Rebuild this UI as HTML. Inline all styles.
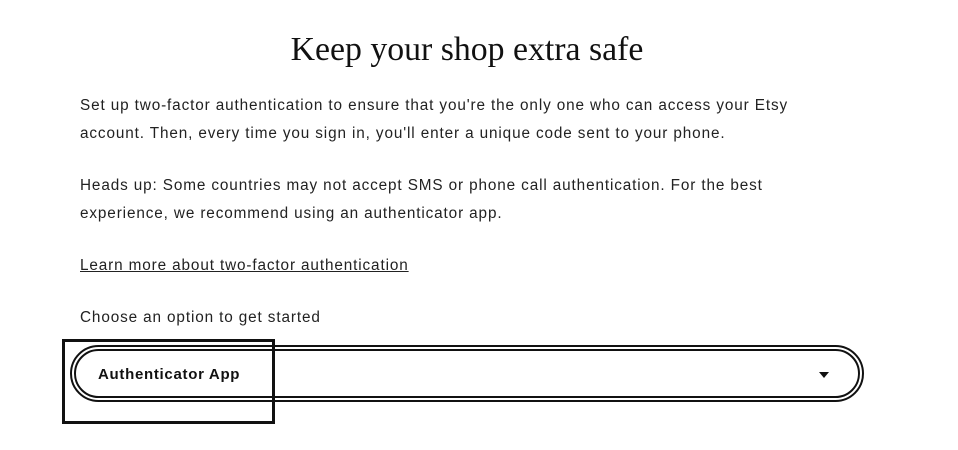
<!DOCTYPE html>
<html><head><style>
body{margin:0;width:958px;height:450px;background:#fff;font-family:"Liberation Sans",sans-serif;color:#222;position:relative;overflow:hidden}
h1{position:absolute;top:31px;left:0;width:934px;text-align:center;margin:0;font-family:"Liberation Serif",serif;font-weight:normal;font-size:33.8px;color:#111}
p{position:absolute;left:80px;margin:0;font-size:15.3px;line-height:28px;width:860px;white-space:nowrap;letter-spacing:0.88px}
a{color:#222;text-decoration:underline}
.sel{position:absolute;left:70px;top:345px;width:790px;height:53px;border:2px solid #111;border-radius:30px;box-sizing:content-box}
.sel:after{content:"";position:absolute;left:2px;top:2px;right:2px;bottom:2px;border:2px solid #111;border-radius:26px}
.lbl{position:absolute;left:98px;top:366px;font-size:15px;font-weight:bold;color:#111;letter-spacing:0.7px}
.arr{position:absolute;left:819px;top:372px;width:0;height:0;border-left:5px solid transparent;border-right:5px solid transparent;border-top:6px solid #111}
.focus{position:absolute;left:62px;top:339px;width:207px;height:79px;border:3px solid #111}
</style></head><body>
<h1>Keep your shop extra safe</h1>
<p style="top:92px">Set up two-factor authentication to ensure that you're the only one who can access your Etsy<br>account. Then, every time you sign in, you'll enter a unique code sent to your phone.</p>
<p style="top:172px">Heads up: Some countries may not accept SMS or phone call authentication. For the best<br>experience, we recommend using an authenticator app.</p>
<p style="top:252px"><a>Learn more about two-factor authentication</a></p>
<p style="top:304px">Choose an option to get started</p>
<div class="sel"></div>
<div class="lbl">Authenticator App</div>
<div class="arr"></div>
<div class="focus"></div>
</body></html>
